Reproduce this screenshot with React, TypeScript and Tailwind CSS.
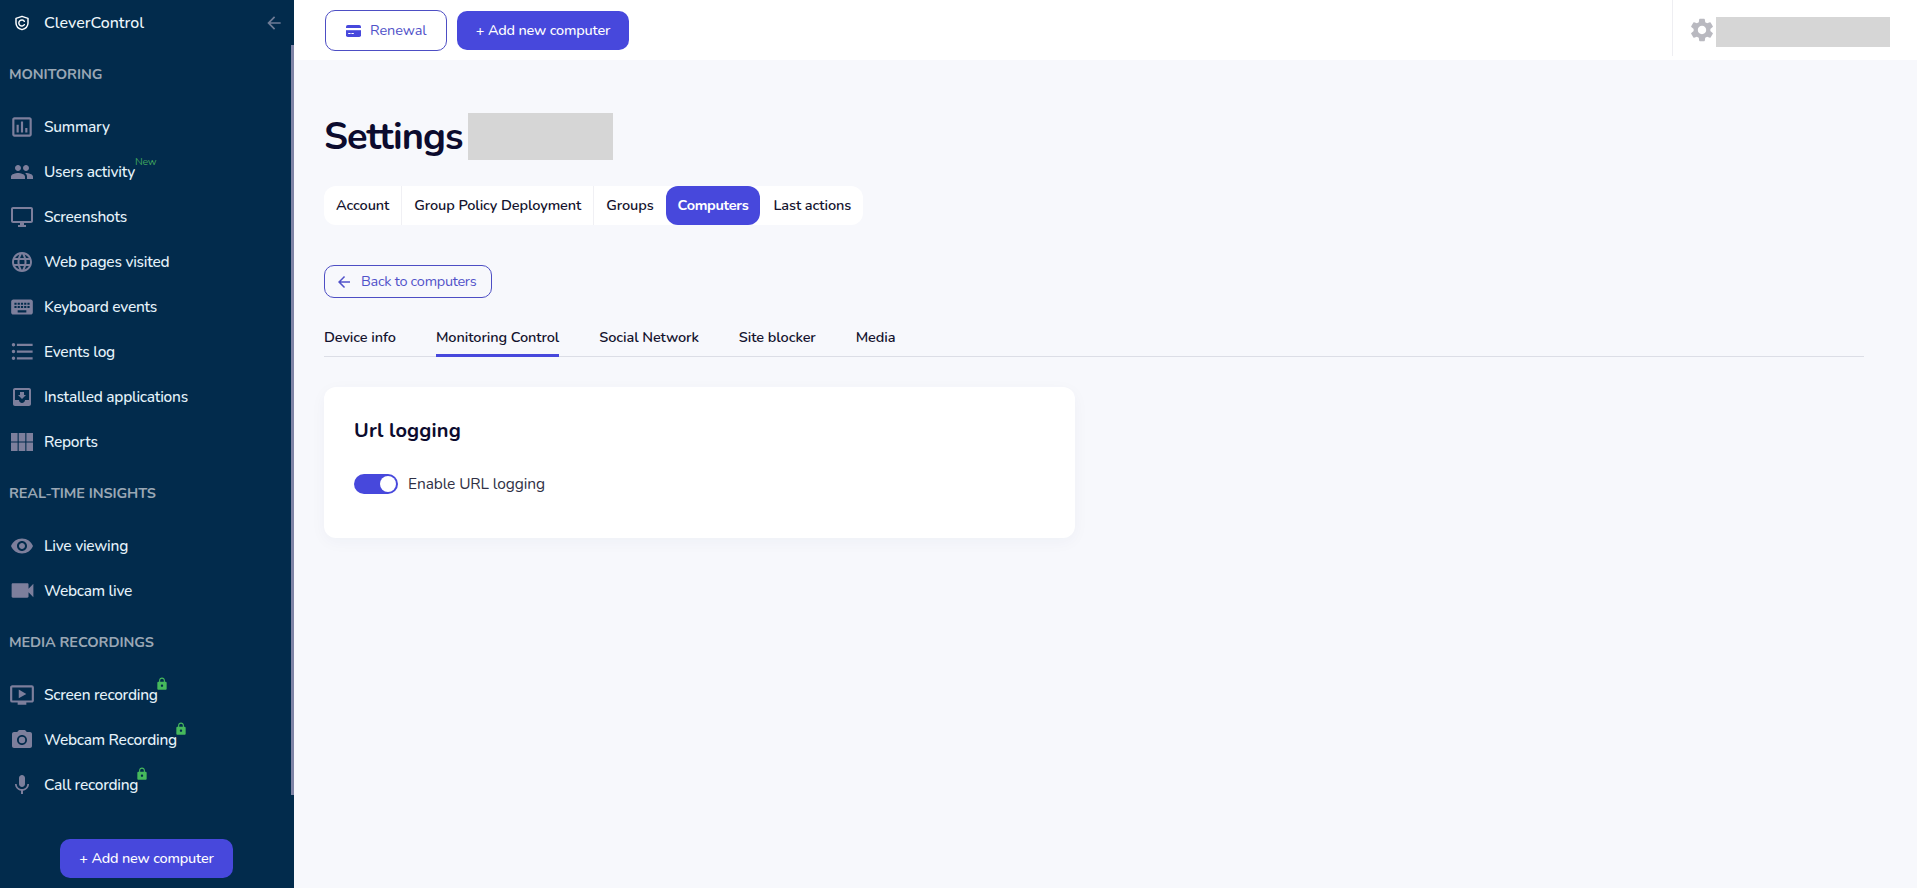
import React from "react";
import {
  MdOutlineAssessment, MdPeople, MdOutlineDesktopWindows, MdLanguage, MdKeyboard, MdFormatListBulleted,
  MdMoveToInbox, MdVisibility, MdVideocam, MdOndemandVideo, MdCameraAlt, MdMic, MdLock,
  MdSettings, MdArrowBack,
} from "react-icons/md";

const FONT = "font-['Nunito','Noto_Sans','Open_Sans',sans-serif]";

type IconType = React.ComponentType<{ className?: string }>;
type Item = { icon: IconType; size: string; label: string; badge?: "new" | "lock" };

function GridIcon({ className }: { className?: string }) {
  return (
    <svg viewBox="0 0 22 18" fill="currentColor" className={className}>
      <rect x="0" y="0" width="6.600" height="8.500" />
      <rect x="7.700" y="0" width="6.600" height="8.500" />
      <rect x="15.400" y="0" width="6.600" height="8.500" />
      <rect x="0" y="9.500" width="6.600" height="8.500" />
      <rect x="7.700" y="9.500" width="6.600" height="8.500" />
      <rect x="15.400" y="9.500" width="6.600" height="8.500" />
    </svg>
  );
}

function CardIcon({ className }: { className?: string }) {
  return (
    <svg viewBox="0 0 15 12" className={className}>
      <rect x="0" y="0" width="15" height="12" rx="1.800" fill="#4748dc" />
      <rect x="0" y="3" width="15" height="2.200" fill="#ffffff" />
      <rect x="2.200" y="8" width="2.400" height="1" fill="#ffffff" />
      <rect x="5.400" y="8" width="2.400" height="1" fill="#ffffff" />
    </svg>
  );
}

const monitoring: Item[] = [
  { icon: MdOutlineAssessment, size: "h-[26px] w-[26px]", label: "Summary" },
  { icon: MdPeople, size: "h-[24px] w-[24px]", label: "Users activity", badge: "new" },
  { icon: MdOutlineDesktopWindows, size: "h-[24px] w-[24px]", label: "Screenshots" },
  { icon: MdLanguage, size: "h-[24px] w-[24px]", label: "Web pages visited" },
  { icon: MdKeyboard, size: "h-[26px] w-[26px]", label: "Keyboard events" },
  { icon: MdFormatListBulleted, size: "h-[27px] w-[27px]", label: "Events log" },
  { icon: MdMoveToInbox, size: "h-[24px] w-[24px]", label: "Installed applications" },
  { icon: GridIcon, size: "h-[18px] w-[22px]", label: "Reports" },
];
const realtime: Item[] = [
  { icon: MdVisibility, size: "h-[24px] w-[24px]", label: "Live viewing" },
  { icon: MdVideocam, size: "h-[29px] w-[29px]", label: "Webcam live" },
];
const media: Item[] = [
  { icon: MdOndemandVideo, size: "h-[26px] w-[26px]", label: "Screen recording", badge: "lock" },
  { icon: MdCameraAlt, size: "h-[24px] w-[24px]", label: "Webcam Recording", badge: "lock" },
  { icon: MdMic, size: "h-[24px] w-[24px]", label: "Call recording", badge: "lock" },
];

function Row({ item }: { item: Item }) {
  const Icon = item.icon;
  return (
    <div className="flex h-[45px] items-center pl-[10px]">
      <div className="flex h-[24px] w-[24px] shrink-0 items-center justify-center">
        <Icon className={`${item.size} shrink-0 text-[#7d7f9c]`} />
      </div>
      <div className="relative ml-[10px] text-[15.5px] leading-[20px] font-medium tracking-[-0.25px] text-[#e6f3fb]">
        {item.label}
        {item.badge === "new" && (
          <span className="absolute top-[-7px] left-full text-[10.5px] leading-[14px] font-normal text-[#3fa35c]">New</span>
        )}
        {item.badge === "lock" && (
          <MdLock className="absolute top-[-8px] left-[calc(100%-3px)] h-[14px] w-[14px] text-[#46b95c]" />
        )}
      </div>
    </div>
  );
}

function Heading({ children, className }: { children: React.ReactNode; className: string }) {
  return <div className={`pl-[9px] text-[14.5px] leading-[20px] font-bold tracking-[-0.1px] text-[#9aa7b4] ${className}`}>{children}</div>;
}

function AddButton({ className }: { className: string }) {
  return (
    <button className={`flex h-[39px] items-center justify-center rounded-[10px] bg-[#4748dc] text-[14.5px] font-medium tracking-[-0.2px] text-white ${className}`}>
      + Add new computer
    </button>
  );
}

export default function App() {
  return (
    <div className={`${FONT} flex h-[888px] w-full overflow-hidden bg-[#f7f8fc]`}>
      <aside className="relative flex w-[294px] shrink-0 flex-col bg-[#022b4c]">
        <div className="flex h-[45px] items-center pr-[10px] pl-[14px]">
          <svg viewBox="0 0 24 24" className="h-[16px] w-[16px] shrink-0 text-white" fill="none" stroke="currentColor" strokeWidth="2.2">
            <path d="M12 2l9 3v7c0 5-4 8.500-9 10-5-1.500-9-5-9-10V5z" strokeLinejoin="round" />
            <path d="M15.500 9.500a4.500 4.500 0 1 0 0 5" strokeLinecap="round" />
          </svg>
          <span className="ml-[14px] text-[16px] font-medium text-[#eef6fb]">CleverControl</span>
          <MdArrowBack className="ml-auto h-[20px] w-[20px] text-[#6f7c96]" />
        </div>
        <Heading className="mt-[19px]">MONITORING</Heading>
        <div className="mt-[20px]">
          {monitoring.map((i) => <Row key={i.label} item={i} />)}
        </div>
        <Heading className="mt-[19px]">REAL-TIME INSIGHTS</Heading>
        <div className="mt-[20px]">
          {realtime.map((i) => <Row key={i.label} item={i} />)}
        </div>
        <Heading className="mt-[19px]">MEDIA RECORDINGS</Heading>
        <div className="mt-[20px]">
          {media.map((i) => <Row key={i.label} item={i} />)}
        </div>
        <AddButton className="mt-[32px] ml-[60px] w-[173px]" />
        <div className="absolute top-[45px] right-0 h-[750px] w-[3px] bg-[#7f84a6]" />
      </aside>

      <div className="flex min-w-0 flex-1 flex-col">
        <header className="flex h-[60px] shrink-0 items-start bg-white pl-[31px]">
          <button className="mt-[10px] flex h-[41px] w-[122px] items-center rounded-[10px] border border-[#4d4ec4] pl-[20px] text-[14.5px] tracking-[-0.1px] text-[#5152c9]">
            <CardIcon className="h-[12px] w-[15px] shrink-0" />
            <span className="ml-[9px]">Renewal</span>
          </button>
          <AddButton className="mt-[11px] ml-[10px] w-[172px]" />
          <div className="ml-auto flex h-[56px] items-start border-l border-[#eeeef2] pt-[16px] pr-[27px] pl-[15px]">
            <MdSettings className="h-[28px] w-[28px] text-[#b9b9c0]" />
            <div className="mt-[1px] h-[30px] w-[174px] bg-[#d6d6d6]" />
          </div>
        </header>

        <main className="flex-1 pt-[53px] pr-[53px] pl-[30px]">
          <div className="flex items-center">
            <h1 className="text-[38px] leading-[47px] font-bold tracking-[-1px] text-[#0c0b2e]">Settings</h1>
            <div className="ml-[5px] h-[47px] w-[145px] bg-[#d6d6d6]" />
          </div>

          <div className="mt-[26px] flex h-[39px] w-fit items-stretch rounded-[12px] bg-white text-[14.5px] font-semibold tracking-[-0.1px] text-[#14132e]">
            <div className="flex items-center border-r border-[#f0f0f4] px-[12px]">Account</div>
            <div className="flex items-center border-r border-[#f0f0f4] px-[12px]">Group Policy Deployment</div>
            <div className="flex items-center px-[12px]">Groups</div>
            <div className="flex items-center rounded-[12px] bg-[#4748dc] px-[12px] font-bold tracking-[-0.3px] text-white">Computers</div>
            <div className="flex items-center pr-[12px] pl-[13px]">Last actions</div>
          </div>

          <button className="mt-[40px] flex h-[33px] w-[168px] items-center rounded-[10px] border border-[#4d4ec4] pl-[10px] text-[14.5px] tracking-[-0.3px] text-[#5152c9]">
            <MdArrowBack className="mr-[8px] h-[18px] w-[18px]" />
            Back to computers
          </button>

          <div className="mt-[25px] flex h-[34px] gap-[40px] border-b border-[#dcdee6] text-[14.5px] font-semibold tracking-[-0.08px] text-[#14132e]">
            <div className="pt-[4px]">Device info</div>
            <div className="h-[34px] border-b-[3px] border-[#4748dc] pt-[4px]">Monitoring Control</div>
            <div className="pt-[4px]">Social Network</div>
            <div className="pt-[4px]">Site blocker</div>
            <div className="pt-[4px]">Media</div>
          </div>

          <section className="mt-[30px] h-[151px] w-[751px] rounded-[12px] bg-white pt-[30px] pl-[30px] shadow-[0_4px_16px_rgba(30,40,90,0.04)]">
            <h2 className="text-[20px] leading-[28px] font-bold tracking-[0.15px] text-[#0c0b2e]">Url logging</h2>
            <div className="mt-[27px] flex items-center">
              <div className="flex h-[20px] w-[44px] items-center justify-end rounded-full bg-[#4748dc] pr-[2px]">
                <div className="h-[16px] w-[16px] rounded-full bg-white" />
              </div>
              <span className="ml-[10px] text-[15.5px] tracking-[-0.1px] text-[#2f3045]">Enable URL logging</span>
            </div>
          </section>
        </main>
      </div>
    </div>
  );
}
